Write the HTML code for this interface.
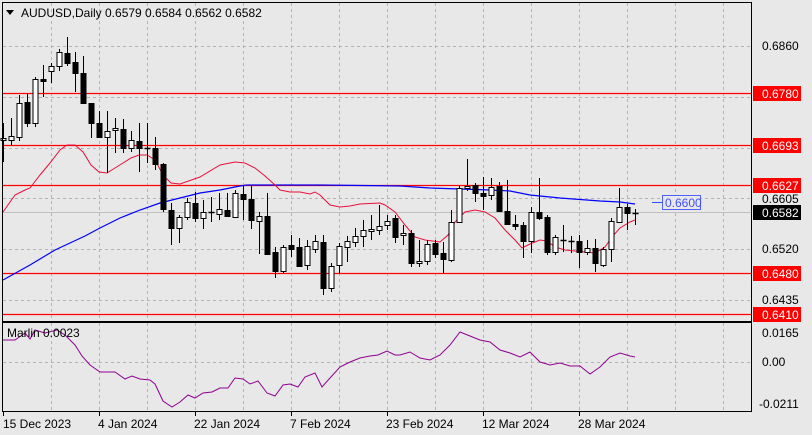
<!DOCTYPE html>
<html><head><meta charset="utf-8"><style>
html,body{margin:0;padding:0;background:#e8e8e8;}
svg{display:block;font-family:"Liberation Sans",sans-serif;}
</style></head><body>
<svg id="s" width="812" height="435" viewBox="0 0 812 435" xmlns="http://www.w3.org/2000/svg">
<rect x="0" y="0" width="812" height="435" fill="#e8e8e8"/>
<g id="grid" stroke="#b4b4b4" stroke-dasharray="3,3" stroke-width="1"></g>
<line x1="3" y1="212.5" x2="751" y2="212.5" stroke="#c0c0c0"/>
<g stroke="#ff0000" stroke-width="1.3">
<line x1="3" y1="93.5" x2="751" y2="93.5"/>
<line x1="3" y1="145.5" x2="751" y2="145.5"/>
<line x1="3" y1="185.5" x2="751" y2="185.5"/>
<line x1="3" y1="273.5" x2="751" y2="273.5"/>
<line x1="3" y1="314.5" x2="751" y2="314.5"/>
</g>
<polyline id="blue" fill="none" stroke="#0000ff" stroke-width="1.2" points="3,280 30,265 55,250 70,243 85,236 100,228 120,218 140,210 160,203 180,198 200,193 220,190 240,186 247,185 320,185 400,186 430,188 460,189 490,190 510,191 530,195 560,198 600,201 620,202 635,204"/>
<polyline fill="none" stroke="#e8103c" stroke-width="1" points="3,212 15,195 25,190 30,188 40,175 50,163 60,150 67,145 75,145 83,152 91,165 99,172 107,173 115,168 123,163 131,158 139,155 147,155 155,160 163,175 171,183 180,184 200,177 220,165 235,162 245,163 255,168 265,176 275,185 280,190 290,192 300,192 310,194 315,192 320,195 325,200 330,205 340,207 350,206 360,204 380,203 385,205 395,212 405,225 415,237 425,240 440,242 448,235 455,222 465,212 475,210 485,212 495,218 505,230 515,240 522,248 530,244 540,240 547,241 555,247 565,250 585,252 595,253 605,247 612,237 620,228 630,222 635,220"/>
<g id="candles"></g>
<line x1="652" y1="202.5" x2="662" y2="202.5" stroke="#3050ff"/>
<rect x="662.5" y="195.5" width="38" height="14" fill="#e8e8e8" stroke="#5060ff"/>
<text x="665" y="207" font-size="12" fill="#4050ff">0.6600</text>
<polyline fill="none" stroke="#900090" stroke-width="1" points="3,340 15,340 25,333 30,339 35,330 45,333 57,330 65,335 75,345 82,356 90,365 100,372 115,372 125,379 132,376 140,379 150,380 155,384 163,401 172,407 180,402 188,395 195,398 203,393 212,392 220,388 228,388 235,378 243,379 250,384 258,381 267,393 275,396 283,385 290,384 298,387 305,377 315,373 322,387 330,378 340,367 350,362 360,358 370,356 378,355 387,351 395,355 400,355 410,352 420,358 430,360 440,355 450,345 460,332 470,336 480,340 490,342 500,350 510,353 520,357 530,352 540,362 550,365 560,363 570,366 580,366 590,374 600,367 610,357 620,353 630,356 635,357"/>
<rect x="2.5" y="2.5" width="749" height="319" fill="none" stroke="#000"/>
<rect x="2.5" y="322.5" width="749" height="89" fill="none" stroke="#000"/>
<path d="M6 10 L14 10 L10 15 Z" fill="#000"/>
<text x="21" y="17" font-size="12" fill="#000">AUDUSD,Daily  0.6579 0.6584 0.6562 0.6582</text>
<text x="7" y="337" font-size="12" fill="#000">Marlin 0.0023</text>
<g font-size="12" fill="#000">
<text x="762" y="50">0.6860</text>
<text x="762" y="203">0.6605</text>
<text x="762" y="253">0.6520</text>
<text x="762" y="304">0.6435</text>
<text x="762" y="337">0.0165</text>
<text x="762" y="366">0.00</text>
<text x="759" y="408">-0.0211</text>
</g>
<g font-size="12" fill="#fff">
<rect x="753" y="86" width="48" height="15" fill="#ff0000"/><text x="762" y="98">0.6780</text>
<rect x="753" y="138" width="48" height="15" fill="#ff0000"/><text x="762" y="150">0.6693</text>
<rect x="753" y="178" width="48" height="15" fill="#ff0000"/><text x="762" y="190">0.6627</text>
<rect x="753" y="205" width="48" height="15" fill="#000"/><text x="762" y="217">0.6582</text>
<rect x="753" y="266" width="48" height="15" fill="#ff0000"/><text x="762" y="278">0.6480</text>
<rect x="753" y="307" width="48" height="15" fill="#ff0000"/><text x="762" y="319">0.6410</text>
</g>
<g stroke="#000">
<line x1="3.5" y1="411" x2="3.5" y2="416"/><line x1="99.5" y1="411" x2="99.5" y2="416"/><line x1="195.5" y1="411" x2="195.5" y2="416"/><line x1="291.5" y1="411" x2="291.5" y2="416"/><line x1="387.5" y1="411" x2="387.5" y2="416"/><line x1="483.5" y1="411" x2="483.5" y2="416"/><line x1="579.5" y1="411" x2="579.5" y2="416"/>
</g>
<g font-size="12" fill="#000">
<text x="3" y="428">15 Dec 2023</text>
<text x="98" y="428">4 Jan 2024</text>
<text x="194" y="428">22 Jan 2024</text>
<text x="290" y="428">7 Feb 2024</text>
<text x="386" y="428">23 Feb 2024</text>
<text x="482" y="428">12 Mar 2024</text>
<text x="578" y="428">28 Mar 2024</text>
</g>
</svg>
<script>
var NS="http://www.w3.org/2000/svg";
function el(p,t,a){var e=document.createElementNS(NS,t);for(var k in a)e.setAttribute(k,a[k]);p.appendChild(e);return e;}
var g=document.getElementById("grid");
for(var x=51;x<751;x+=48){el(g,"line",{x1:x+.5,y1:3,x2:x+.5,y2:321});el(g,"line",{x1:x+.5,y1:323,x2:x+.5,y2:411});}
[46,97,148,198,249,300].forEach(function(y){el(g,"line",{x1:3,y1:y+.5,x2:751,y2:y+.5});});
el(g,"line",{x1:3,y1:362.5,x2:751,y2:362.5});
// [open, close, high, low] in px
var C=[[140,138,123,162],[140,136,118,145],[137,103,95,141],[102,123,93,127],[123,79,77,127],[79,81,65,97],[71,66,63,83],[66,52,49,71],[53,63,37,66],[62,73,52,92],
[73,103,56,104],[103,123,104,138],[123,137,111,138],[137,131,111,173],[130,128,118,153],[129,148,119,153],[148,140,131,152],[141,148,123,172],[148,148,123,163],[148,164,137,170],
[164,209,163,212],[210,228,203,245],[228,217,215,243],[217,202,198,220],[203,218,192,222],[218,212,200,229],[212,212,197,222],[214,209,193,220],[210,216,193,217],[217,193,190,218],
[194,199,185,220],[199,220,185,229],[221,216,212,254],[216,254,193,254],[252,271,247,278],[271,247,245,273],[245,249,235,257],[247,266,238,267],[265,246,240,270],[249,241,235,253],
[242,288,235,295],[288,266,263,292],[265,246,243,274],[247,241,236,262],[242,236,228,247],[236,230,220,247],[231,229,215,240],[230,226,205,235],[225,221,215,230],[218,237,215,243],
[235,233,225,245],[233,263,230,267],[263,261,240,267],[261,244,240,265],[243,254,240,258],[253,259,242,273],[260,222,210,262],[222,188,185,223],[188,186,159,191],[185,193,183,202],
[193,196,177,210],[195,187,178,200],[186,211,182,212],[211,224,180,225],[224,226,215,230],[225,241,222,258],[241,212,207,253],[212,218,178,220],[217,252,215,255],[252,237,235,255],
[240,240,225,252],[241,241,236,253],[241,252,235,268],[252,248,240,255],[248,263,239,272],[265,249,247,267],[249,221,218,262],[222,207,188,223],[207,213,204,230],[213,213,209,225]];
var cg=document.getElementById("candles");
C.forEach(function(c,i){var x=3+8*i+.5;var o=c[0],cl=c[1];
el(cg,"line",{x1:x,y1:c[2],x2:x,y2:c[3],stroke:"#000"});
var top=Math.min(o,cl),h=Math.abs(o-cl);
if(h<1){el(cg,"line",{x1:x-3,y1:o+.5,x2:x+3,y2:o+.5,stroke:"#000","stroke-width":1.5});}
else el(cg,"rect",{x:x-2.5,y:top+.5,width:5,height:h,fill:cl<o?"#fff":"#000",stroke:"#000"});});
</script>
</body></html>
